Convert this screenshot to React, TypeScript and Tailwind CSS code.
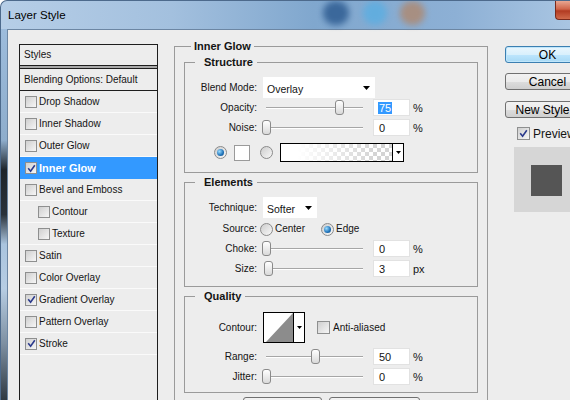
import React from "react";

function Check({ on, big }: { on?: boolean; big?: boolean }) {
  return (
    <span
      className={
        big
          ? "flex h-[13px] w-[13px] shrink-0 items-center justify-center border border-[#8e8f8f] bg-[linear-gradient(135deg,#cfcfcf,#f6f6f6)]"
          : "flex h-[12px] w-[12px] shrink-0 items-center justify-center border border-[#8e8f8f] bg-[linear-gradient(135deg,#cfcfcf,#f6f6f6)]"
      }
    >
      {on ? (
        <svg width="9" height="9" viewBox="0 0 9 9">
          <path d="M1.2 4.3 L3.6 7.2 L7.8 1.2" fill="none" stroke="#2b3a8c" strokeWidth="1.6" />
        </svg>
      ) : null}
    </span>
  );
}

function Radio({ on }: { on?: boolean }) {
  return (
    <span className="flex h-[13px] w-[13px] shrink-0 items-center justify-center rounded-full border border-[#8a8a8a] bg-[linear-gradient(135deg,#cdcdcd,#f8f8f8)]">
      {on ? (
        <span className="h-[7px] w-[7px] rounded-full bg-[radial-gradient(circle_at_35%_35%,#9adcff,#1f72b8_60%,#0c4780)]" />
      ) : null}
    </span>
  );
}

function Arrow() {
  return (
    <svg width="7" height="4" viewBox="0 0 7 4" className="block shrink-0">
      <path d="M0 0H7L3.5 4Z" fill="#000" />
    </svg>
  );
}

function SmallArrow() {
  return (
    <svg width="5" height="3" viewBox="0 0 5 3" className="block shrink-0">
      <path d="M0 0H5L2.5 3Z" fill="#000" />
    </svg>
  );
}

function Slider({ v }: { v: number }) {
  return (
    <div className="relative ml-[6px] h-[15px] w-[107px] shrink-0">
      <div className="absolute left-[3px] top-[7px] h-[2px] w-[97px] border-t border-[#a6a6a6] bg-white" />
      <div
        className="absolute top-0 h-[15px] w-[9px] rounded-[3px] border border-[#8a8a8a] bg-[linear-gradient(to_bottom,#ffffff,#d9d9d9)]"
        style={{ left: 3 + v * 0.97 - 4 }}
      />
    </div>
  );
}

function Num({ v, sel }: { v: string; sel?: boolean }) {
  return (
    <div className="ml-[3px] flex h-[17px] w-[37px] shrink-0 items-center border border-[#e2e2e2] bg-white pl-[4px] text-[11px]">
      {sel ? <span className="bg-[#3399ff] px-[1px] text-white">{v}</span> : <span className="pl-[1px]">{v}</span>}
    </div>
  );
}

function Label({ t }: { t: string }) {
  return <span className="w-[72px] shrink-0 text-right">{t}</span>;
}

function SliderRow({ label, v, val, unit, sel, mt }: { label: string; v: number; val: string; unit: string; sel?: boolean; mt: string }) {
  return (
    <div className={"flex h-[17px] items-center " + mt}>
      <Label t={label} />
      <Slider v={v} />
      <Num v={val} sel={sel} />
      <span className="ml-[3px] text-[11px]">{unit}</span>
    </div>
  );
}

const rows: { t: string; on?: boolean; ind?: boolean; sel?: boolean }[] = [
  { t: "Drop Shadow" },
  { t: "Inner Shadow" },
  { t: "Outer Glow" },
  { t: "Inner Glow", on: true, sel: true },
  { t: "Bevel and Emboss" },
  { t: "Contour", ind: true },
  { t: "Texture", ind: true },
  { t: "Satin" },
  { t: "Color Overlay" },
  { t: "Gradient Overlay", on: true },
  { t: "Pattern Overlay" },
  { t: "Stroke", on: true },
];

const grayBtn =
  "flex h-[17px] w-[85px] shrink-0 items-center justify-center rounded-[3px] border border-[#707070] bg-[linear-gradient(to_bottom,#f2f2f2_0%,#ebebeb_50%,#dddddd_51%,#cfcfcf_100%)] text-[12px] text-black";

export default function App() {
  return (
    <div className="relative flex h-[400px] w-[570px] flex-col overflow-hidden rounded-tl-[7px] border-l border-t border-[#4d6a8c] bg-[linear-gradient(to_right,#b6cee7_0%,#a3c0de_30%,#80a7ce_55%,#8db0d5_80%,#a9c5e2_100%)] font-['Liberation_Sans',Arial,sans-serif] text-[10px] leading-[12px] text-[#141414]">
      {/* title bar */}
      <div className="relative flex h-[28px] shrink-0 items-center">
        <span className="absolute left-[322px] top-[0px] h-[24px] w-[26px] rounded-full bg-[#2f5d92] opacity-85 blur-[3px]" />
        <span className="absolute left-[362px] top-[0px] h-[24px] w-[24px] rounded-full bg-[#5aaee2] opacity-80 blur-[3px]" />
        <span className="absolute left-[399px] top-[0px] h-[24px] w-[25px] rounded-full bg-[#ad8a74] opacity-85 blur-[3px]" />
        <span className="relative pl-[7px] text-[11.5px] text-black">Layer Style</span>
        <span className="relative ml-auto h-[19px] w-[15px] self-start rounded-bl-[4px] border-b border-l border-[#7a2a1c] bg-[linear-gradient(to_bottom,#e9a792_0%,#d0654a_45%,#b23b22_55%,#d06a4b_100%)]" />
      </div>

      {/* body */}
      <div className="flex min-h-0 flex-1">
        <div className="w-[6px] shrink-0 bg-[linear-gradient(to_bottom,#9dbcdc_0%,#8eadcc_30%,#1e242a_38%,#2a323a_50%,#aac4de_58%,#b7cde3_70%,#7d8fa1_85%,#2f3942_100%)]" />
        <div className="flex flex-1 items-start border-l border-t border-[#6c86a3] bg-[#ededed] pl-[11px]">
          {/* styles list */}
          <div className="mt-[14px] h-[400px] w-[139px] shrink-0 border border-[#1e1e1e]">
            <div className="flex h-[21px] items-center border-b border-[#1e1e1e] pl-[4px]">Styles</div>
            <div className="h-[2px] bg-[#a9a9a9]" />
            <div className="flex h-[23px] items-center border-b border-t border-[#1e1e1e] pl-[4px]">Blending Options: Default</div>
            {rows.map((r) => (
              <div
                key={r.t}
                className={
                  (r.sel ? "bg-[#3399ff] font-bold text-white text-[11px] " : "border-b border-[#fafafa] ") +
                  (r.ind ? "flex h-[22px] items-center pl-[18px]" : "flex h-[22px] items-center pl-[5px]")
                }
              >
                <Check on={r.on} />
                <span className="ml-[2px]">{r.t}</span>
              </div>
            ))}
          </div>

          {/* Inner Glow group */}
          <fieldset className="ml-[16px] mt-[10px] w-[314px] shrink-0 border border-[#9a9a9a] px-[9px] pb-[40px] pt-[3px]">
            <legend className="ml-[7px] px-[3px] text-[11px] font-bold leading-[13px]">Inner Glow</legend>
            <div className="flex flex-col gap-[3px]">
              {/* Structure */}
              <fieldset className="border border-[#9a9a9a] pb-[10px]">
                <legend className="ml-[10px] pl-[9px] pr-[4px] text-[11px] font-bold leading-[13px]">Structure</legend>
                <div className="mt-[8px] flex h-[21px] items-center">
                  <Label t="Blend Mode:" />
                  <div className="ml-[6px] flex h-[21px] w-[112px] items-center justify-between bg-white pl-[4px] pr-[5px] text-[10.5px]">
                    <span className="mt-[2px]">Overlay</span>
                    <Arrow />
                  </div>
                </div>
                <SliderRow label="Opacity:" v={75} val="75" unit="%" sel mt="mt-[1px]" />
                <SliderRow label="Noise:" v={0} val="0" unit="%" mt="mt-[3px]" />
                <div className="mt-[7px] flex h-[19px] items-center">
                  <span className="ml-[29px]">
                    <Radio on />
                  </span>
                  <span className="ml-[7px] h-[16px] w-[16px] border border-[#9a9a9a] bg-white" />
                  <span className="ml-[10px]">
                    <Radio />
                  </span>
                  <div className="ml-[7px] flex h-[19px] w-[124px] border border-black bg-white">
                    <div className="flex-1 bg-[image:linear-gradient(to_right,#ffffff_0%,#ffffff_15%,rgba(255,255,255,0)_85%),repeating-conic-gradient(#d4d4d4_0%_25%,#ffffff_0%_50%)] bg-[length:100%_100%,8px_8px]" />
                    <div className="flex w-[11px] items-center justify-center border-l border-black">
                      <SmallArrow />
                    </div>
                  </div>
                </div>
              </fieldset>

              {/* Elements */}
              <fieldset className="border border-[#9a9a9a] pb-[9px]">
                <legend className="ml-[10px] pl-[9px] pr-[4px] text-[11px] font-bold leading-[13px]">Elements</legend>
                <div className="mt-[8px] flex h-[21px] items-center">
                  <Label t="Technique:" />
                  <div className="ml-[6px] flex h-[21px] w-[54px] items-center justify-between bg-white pl-[4px] pr-[5px] text-[10.5px]">
                    <span className="mt-[2px]">Softer</span>
                    <Arrow />
                  </div>
                </div>
                <div className="mt-[4px] flex h-[14px] items-center">
                  <Label t="Source:" />
                  <span className="ml-[3px]">
                    <Radio />
                  </span>
                  <span className="ml-[2px]">Center</span>
                  <span className="ml-[16px]">
                    <Radio on />
                  </span>
                  <span className="ml-[2px]">Edge</span>
                </div>
                <SliderRow label="Choke:" v={0} val="0" unit="%" mt="mt-[4px]" />
                <SliderRow label="Size:" v={2} val="3" unit="px" mt="mt-[3px]" />
              </fieldset>

              {/* Quality */}
              <fieldset className="border border-[#9a9a9a] pb-[7px]">
                <legend className="ml-[10px] pl-[9px] pr-[4px] text-[11px] font-bold leading-[13px]">Quality</legend>
                <div className="mt-[9px] flex h-[31px] items-center">
                  <Label t="Contour:" />
                  <div className="ml-[6px] flex h-[31px] w-[42px] border border-black bg-white">
                    <svg width="29" height="29" viewBox="0 0 29 29" className="block shrink-0">
                      <path d="M2 29 L29 0 L29 29 Z" fill="#8c8c8c" />
                    </svg>
                    <div className="flex flex-1 items-center justify-center border-l border-black">
                      <SmallArrow />
                    </div>
                  </div>
                  <span className="ml-[12px]">
                    <Check big />
                  </span>
                  <span className="ml-[3px]">Anti-aliased</span>
                </div>
                <SliderRow label="Range:" v={50} val="50" unit="%" mt="mt-[5px]" />
                <SliderRow label="Jitter:" v={0} val="0" unit="%" mt="mt-[3px]" />
              </fieldset>

              <div className="mt-[1px] flex justify-center gap-[7px]">
                <div className="flex h-[22px] w-[79px] items-start justify-center rounded-[3px] border border-[#707070] bg-[linear-gradient(to_bottom,#f2f2f2_0%,#ebebeb_50%,#dddddd_51%,#cfcfcf_100%)] pt-[8px] text-[11px]">
                  Make Default
                </div>
                <div className="flex h-[22px] w-[91px] items-start justify-center rounded-[3px] border border-[#707070] bg-[linear-gradient(to_bottom,#f2f2f2_0%,#ebebeb_50%,#dddddd_51%,#cfcfcf_100%)] pt-[8px] text-[11px]">
                  Reset to Default
                </div>
              </div>
            </div>
          </fieldset>

          {/* right column */}
          <div className="ml-[17px] mt-[16px] flex w-[90px] shrink-0 flex-col">
            <div className="flex h-[17px] w-[85px] shrink-0 items-center justify-center rounded-[3px] border border-[#3c7fb1] bg-[linear-gradient(to_bottom,#eaf6fd_0%,#d9f0fc_50%,#bee6fd_51%,#a7d9f5_100%)] text-[12px] text-black shadow-[inset_0_0_0_1px_#bfe6fb]">
              OK
            </div>
            <div className={"mt-[10px] " + grayBtn}>Cancel</div>
            <div className={"mt-[11px] " + grayBtn}>New Style...</div>
            <div className="ml-[12px] mt-[9px] flex h-[13px] items-center">
              <Check on big />
              <span className="ml-[3px] whitespace-nowrap text-[12px]">Preview</span>
            </div>
            <div className="ml-[9px] mt-[7px] h-[65px] w-[80px] bg-[#d6d6d6] pl-[17px] pt-[18px]">
              <div className="h-[31px] w-[31px] bg-[#555555]" />
            </div>
          </div>
        </div>
      </div>
    </div>
  );
}
